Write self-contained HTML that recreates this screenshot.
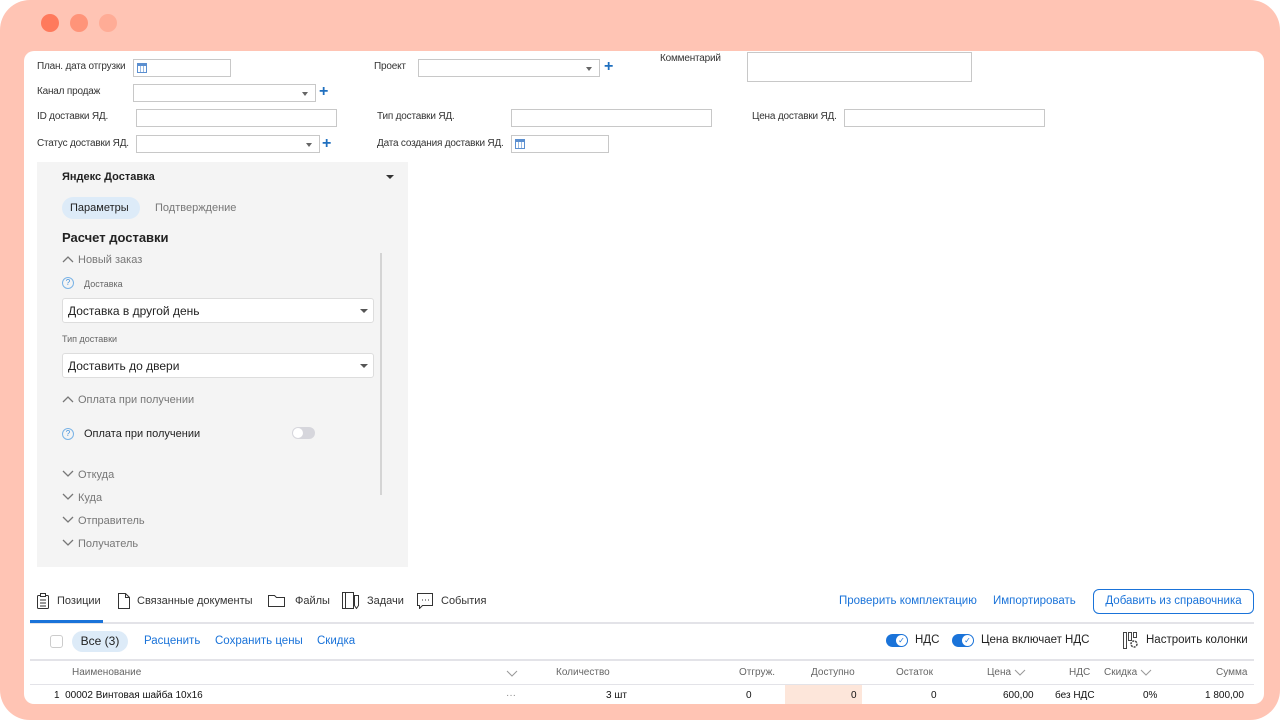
<!DOCTYPE html>
<html><head><meta charset="utf-8"><style>
*{box-sizing:border-box;margin:0;padding:0}
body{width:1280px;height:720px;background:#fff;font-family:"Liberation Sans",sans-serif;position:relative;overflow:hidden;color:#222}
.frame{position:absolute;left:0;top:0;width:1280px;height:720px;background:#ffc4b4;border-radius:30px}
.dot{position:absolute;top:14px;width:18px;height:18px;border-radius:50%}
.win{position:absolute;left:24px;top:51px;width:1240px;height:653px;background:#fff;border-radius:10px;overflow:hidden}
.a{position:absolute;white-space:nowrap}
.l{font-size:10px;color:#333;letter-spacing:-0.2px}
.in{position:absolute;height:18px;border:1px solid #c8c8c8;background:#fff}
.dd:after{content:"";position:absolute;right:7px;top:7px;border:3.5px solid transparent;border-top:4px solid #666}
.plus{position:absolute;color:#1f6fbf;font-size:16px;font-weight:bold;line-height:16px}
.cal{position:absolute;left:3px;top:3px;width:10px;height:10px;border:1px solid #5b8fd0;border-top:3px solid #5b8fd0;background:repeating-linear-gradient(90deg,#fff 0 2px,#9bbbe3 2px 3px)}
.gray{position:absolute;left:13px;top:111px;width:371px;height:405px;background:#f4f4f4}
.sel{position:absolute;left:25px;width:312px;height:25px;background:#fff;border:1px solid #ddd;border-radius:3px;font-size:12px;padding:5px 5px;color:#222}
.sel:after{content:"";position:absolute;right:5px;top:10px;border:4px solid transparent;border-top:4px solid #555}
.sec{font-size:11px;color:#777}
.sec svg{vertical-align:middle;margin-right:4px;position:relative;top:-1px}
.blue{color:#1a73d9}
.t12{font-size:12px}
.hl{position:absolute;height:1px;background:#e3e3e8}
.tog{position:absolute;width:22px;height:13px;border-radius:7px;background:#1a73d9}
.tog:after{content:"✓";position:absolute;right:1px;top:1px;width:11px;height:11px;border-radius:50%;background:#fff;color:#1a73d9;font-size:8px;text-align:center;line-height:11px}
.th{font-size:10px;color:#666;top:616px}
.th svg{vertical-align:middle;margin-left:3px}
.td{font-size:10px;color:#111;top:639px}
.ic{position:absolute}
</style></head><body>
<div class="frame"></div>
<div class="dot" style="left:41px;background:#ff7a5c"></div>
<div class="dot" style="left:70px;background:#ff9479"></div>
<div class="dot" style="left:99px;background:#ffac96"></div>
<div class="win">
<div class="a l" style="left:13px;top:10px">План. дата отгрузки</div>
<div class="in" style="left:109px;top:8px;width:98px"><span class="cal"></span></div>
<div class="a l" style="left:350px;top:10px">Проект</div>
<div class="in dd" style="left:394px;top:8px;width:182px"></div><div class="plus" style="left:580px;top:8px">+</div>
<div class="a l" style="left:636px;top:2px">Комментарий</div>
<div class="in" style="left:723px;top:1px;width:225px;height:30px"></div>
<div class="a l" style="left:13px;top:35px">Канал продаж</div>
<div class="in dd" style="left:109px;top:33px;width:183px"></div><div class="plus" style="left:295px;top:33px">+</div>
<div class="a l" style="left:13px;top:60px">ID доставки ЯД.</div>
<div class="in" style="left:112px;top:58px;width:201px"></div>
<div class="a l" style="left:353px;top:60px">Тип доставки ЯД.</div>
<div class="in" style="left:487px;top:58px;width:201px"></div>
<div class="a l" style="left:728px;top:60px">Цена доставки ЯД.</div>
<div class="in" style="left:820px;top:58px;width:201px"></div>
<div class="a l" style="left:13px;top:87px">Статус доставки ЯД.</div>
<div class="in dd" style="left:112px;top:84px;width:184px"></div><div class="plus" style="left:298px;top:85px">+</div>
<div class="a l" style="left:353px;top:87px">Дата создания доставки ЯД.</div>
<div class="in" style="left:487px;top:84px;width:98px"><span class="cal"></span></div>

<div class="gray">
<div class="a" style="left:25px;top:9px;font-size:11px;font-weight:bold">Яндекс Доставка</div>
<div class="a" style="left:349px;top:13px;border:4px solid transparent;border-top:4px solid #333"></div>
<div class="a" style="left:25px;top:35px;width:78px;height:22px;border-radius:11px;background:#ddebf8"></div>
<div class="a" style="left:33px;top:40px;font-size:11px">Параметры</div>
<div class="a" style="left:118px;top:40px;font-size:11px;color:#777">Подтверждение</div>
<div class="a" style="left:25px;top:68px;font-size:13px;font-weight:bold">Расчет доставки</div>
<div class="a" style="left:343px;top:91px;width:2px;height:242px;background:#d4d4d4"></div>
<div class="a sec" style="left:25px;top:92px"><svg width="12" height="8"><path d="M1 7L6 2L11 7" fill="none" stroke="#777" stroke-width="1.3"/></svg>Новый заказ</div>
<div class="a" style="left:25px;top:115px;width:12px;height:12px;border:1px solid #7ab3e6;border-radius:50%;font-size:8px;color:#3d8ddb;text-align:center;line-height:10px">?</div>
<div class="a" style="left:47px;top:117px;font-size:9px;color:#666">Доставка</div>
<div class="sel" style="top:136px">Доставка в другой день</div>
<div class="a" style="left:25px;top:172px;font-size:9px;color:#666">Тип доставки</div>
<div class="sel" style="top:191px">Доставить до двери</div>
<div class="a sec" style="left:25px;top:232px"><svg width="12" height="8"><path d="M1 7L6 2L11 7" fill="none" stroke="#777" stroke-width="1.3"/></svg>Оплата при получении</div>
<div class="a" style="left:25px;top:266px;width:12px;height:12px;border:1px solid #7ab3e6;border-radius:50%;font-size:8px;color:#3d8ddb;text-align:center;line-height:10px">?</div>
<div class="a" style="left:47px;top:266px;font-size:11px">Оплата при получении</div>
<div class="a" style="left:255px;top:265px;width:23px;height:12px;border-radius:6px;background:#d6d6dc"><div style="position:absolute;left:1px;top:1px;width:10px;height:10px;border-radius:50%;background:#fff"></div></div>
<div class="a sec" style="left:25px;top:307px"><svg width="12" height="8"><path d="M1 1L6 6L11 1" fill="none" stroke="#777" stroke-width="1.3"/></svg>Откуда</div>
<div class="a sec" style="left:25px;top:330px"><svg width="12" height="8"><path d="M1 1L6 6L11 1" fill="none" stroke="#777" stroke-width="1.3"/></svg>Куда</div>
<div class="a sec" style="left:25px;top:353px"><svg width="12" height="8"><path d="M1 1L6 6L11 1" fill="none" stroke="#777" stroke-width="1.3"/></svg>Отправитель</div>
<div class="a sec" style="left:25px;top:376px"><svg width="12" height="8"><path d="M1 1L6 6L11 1" fill="none" stroke="#777" stroke-width="1.3"/></svg>Получатель</div>
</div>

<svg class="ic" style="left:12px;top:542px" width="14" height="16"><rect x="1.5" y="2.5" width="11" height="13" rx="1" fill="none" stroke="#333"/><rect x="4.5" y="0.5" width="5" height="3" fill="#fff" stroke="#333"/><path d="M4 7h6M4 10h6M4 13h6" stroke="#333"/></svg>
<div class="a t12" style="left:33px;top:544px;color:#333;font-size:11px">Позиции</div>
<svg class="ic" style="left:93px;top:542px" width="14" height="16"><path d="M1.5 0.5h7l4 4v11h-11z M8.5 0.5v4h4" fill="none" stroke="#333"/></svg>
<div class="a t12" style="left:113px;top:544px;color:#333;font-size:11px">Связанные документы</div>
<svg class="ic" style="left:244px;top:543px" width="18" height="14"><path d="M0.5 2.5v10h16v-9h-8l-2-2h-6z" fill="none" stroke="#333"/></svg>
<div class="a t12" style="left:271px;top:544px;color:#333;font-size:11px">Файлы</div>
<svg class="ic" style="left:318px;top:541px" width="18" height="17"><path d="M0.5 0.5h3v16h-3z M3.5 0.5h8v16h-8 M12.5 3.5h4v10l-2 3l-2-3z" fill="none" stroke="#333"/></svg>
<div class="a t12" style="left:343px;top:544px;color:#333;font-size:11px">Задачи</div>
<svg class="ic" style="left:393px;top:542px" width="17" height="16"><path d="M0.5 0.5h15v12h-10l-3 3v-3h-2z" fill="none" stroke="#333"/><path d="M5 7h1M8 7h1M11 7h1" stroke="#333"/></svg>
<div class="a t12" style="left:417px;top:544px;color:#333;font-size:11px">События</div>
<div class="hl" style="left:6px;top:571px;width:1224px;height:2px"></div>
<div class="a" style="left:6px;top:569px;width:73px;height:3px;background:#1a73d9"></div>
<div class="a blue" style="left:815px;top:544px;font-size:11.5px">Проверить комплектацию</div>
<div class="a blue" style="left:969px;top:544px;font-size:11.5px">Импортировать</div>
<div class="a blue" style="left:1069px;top:538px;width:161px;height:25px;border:1px solid #1a73d9;border-radius:6px;text-align:center;line-height:23px;font-size:11.5px">Добавить из справочника</div>

<div class="a" style="left:26px;top:584px;width:13px;height:13px;border:1px solid #ccc;border-radius:3px"></div>
<div class="a t12" style="left:48px;top:580px;width:56px;height:21px;border-radius:11px;background:#ddebf8;text-align:center;line-height:21px">Все (3)</div>
<div class="a blue" style="left:120px;top:584px;font-size:11.5px">Расценить</div>
<div class="a blue" style="left:191px;top:584px;font-size:11.5px">Сохранить цены</div>
<div class="a blue" style="left:293px;top:584px;font-size:11.5px">Скидка</div>
<div class="tog" style="left:862px;top:583px"></div><div class="a" style="left:891px;top:583px;font-size:11.5px">НДС</div>
<div class="tog" style="left:928px;top:583px"></div><div class="a" style="left:957px;top:583px;font-size:11.5px">Цена включает НДС</div>
<svg class="ic" style="left:1099px;top:581px" width="16" height="17"><path d="M0.5 0.5h3v16h-3z M5.5 0.5h3v8h-3z M10.5 0.5h3v5h-3z" fill="none" stroke="#444"/><circle cx="11" cy="12" r="3" fill="none" stroke="#444" stroke-width="1.5" stroke-dasharray="2 1"/></svg>
<div class="a" style="left:1122px;top:583px;font-size:11.5px">Настроить колонки</div>
<div class="hl" style="left:6px;top:608px;width:1224px;height:2px"></div>

<div class="a th" style="left:48px">Наименование</div>
<svg class="ic" style="left:482px;top:619px" width="12" height="7"><path d="M1 1L6 6L11 1" fill="none" stroke="#999"/></svg>
<div class="a th" style="left:532px">Количество</div>
<div class="a th" style="left:715px">Отгруж.</div>
<div class="a th" style="left:787px">Доступно</div>
<div class="a th" style="left:872px">Остаток</div>
<div class="a th" style="left:963px">Цена<svg width="12" height="7"><path d="M1 1L6 6L11 1" fill="none" stroke="#999"/></svg></div>
<div class="a th" style="left:1045px">НДС</div>
<div class="a th" style="left:1080px">Скидка<svg width="12" height="7"><path d="M1 1L6 6L11 1" fill="none" stroke="#999"/></svg></div>
<div class="a th" style="left:1192px">Сумма</div>
<div class="hl" style="left:6px;top:633px;width:1224px"></div>
<div class="a" style="left:761px;top:634px;width:77px;height:20px;background:#fde6da"></div>
<div class="a td" style="left:30px">1 &nbsp;00002 Винтовая шайба 10х16</div>
<div class="a td" style="left:482px;color:#888">···</div>
<div class="a td" style="left:582px">3 шт</div>
<div class="a td" style="left:722px">0</div>
<div class="a td" style="left:827px">0</div>
<div class="a td" style="left:907px">0</div>
<div class="a td" style="left:979px">600,00</div>
<div class="a td" style="left:1031px">без НДС</div>
<div class="a td" style="left:1119px">0%</div>
<div class="a td" style="left:1181px">1 800,00</div>
</div>
</body></html>
